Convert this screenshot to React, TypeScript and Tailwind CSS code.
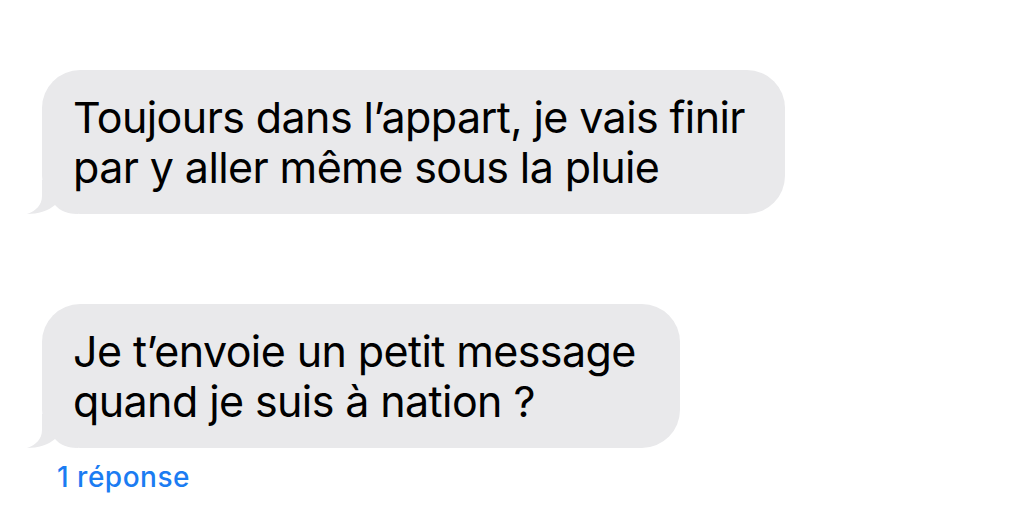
function Tail() {
  return (
    <svg
      className="absolute bottom-0 left-[-16px] h-[34px] w-[52px]"
      viewBox="0 0 52 34"
      fill="#e9e9eb"
    >
      <path d="M16 0 L16 16 C16 25 10 31 1 34 C12 34 22 31 29 25 C34 31 42 34 52 34 L52 0 Z" />
    </svg>
  );
}

function Bubble({ lines, width }: { lines: string[]; width: string }) {
  return (
    <div className={`relative ${width}`}>
      <Tail />
      <div className="relative rounded-[38px] bg-[#e9e9eb] pl-[31px] pt-[22px] pb-[22px] text-[43px] leading-[50px] tracking-[-0.6px] text-black">
        {lines.map((l) => (
          <div key={l}>{l}</div>
        ))}
      </div>
    </div>
  );
}

export default function App() {
  return (
    <div
      className="h-[506px] w-[1024px] overflow-hidden bg-white pl-[42px] pt-[70px]"
      style={{ fontFamily: 'Inter, "Noto Sans", sans-serif' }}
    >
      <Bubble
        width="w-[743px]"
        lines={['Toujours dans l’appart, je vais finir', 'par y aller même sous la pluie']}
      />
      <div className="mt-[90px]">
        <Bubble
          width="w-[638px]"
          lines={['Je t’envoie un petit message', 'quand je suis à nation ?']}
        />
      </div>
      <div className="mt-[13px] pl-[15px] text-[28px] font-medium leading-[32px] tracking-[0.5px] text-[#1b7cf2]">
        1 réponse
      </div>
    </div>
  );
}
